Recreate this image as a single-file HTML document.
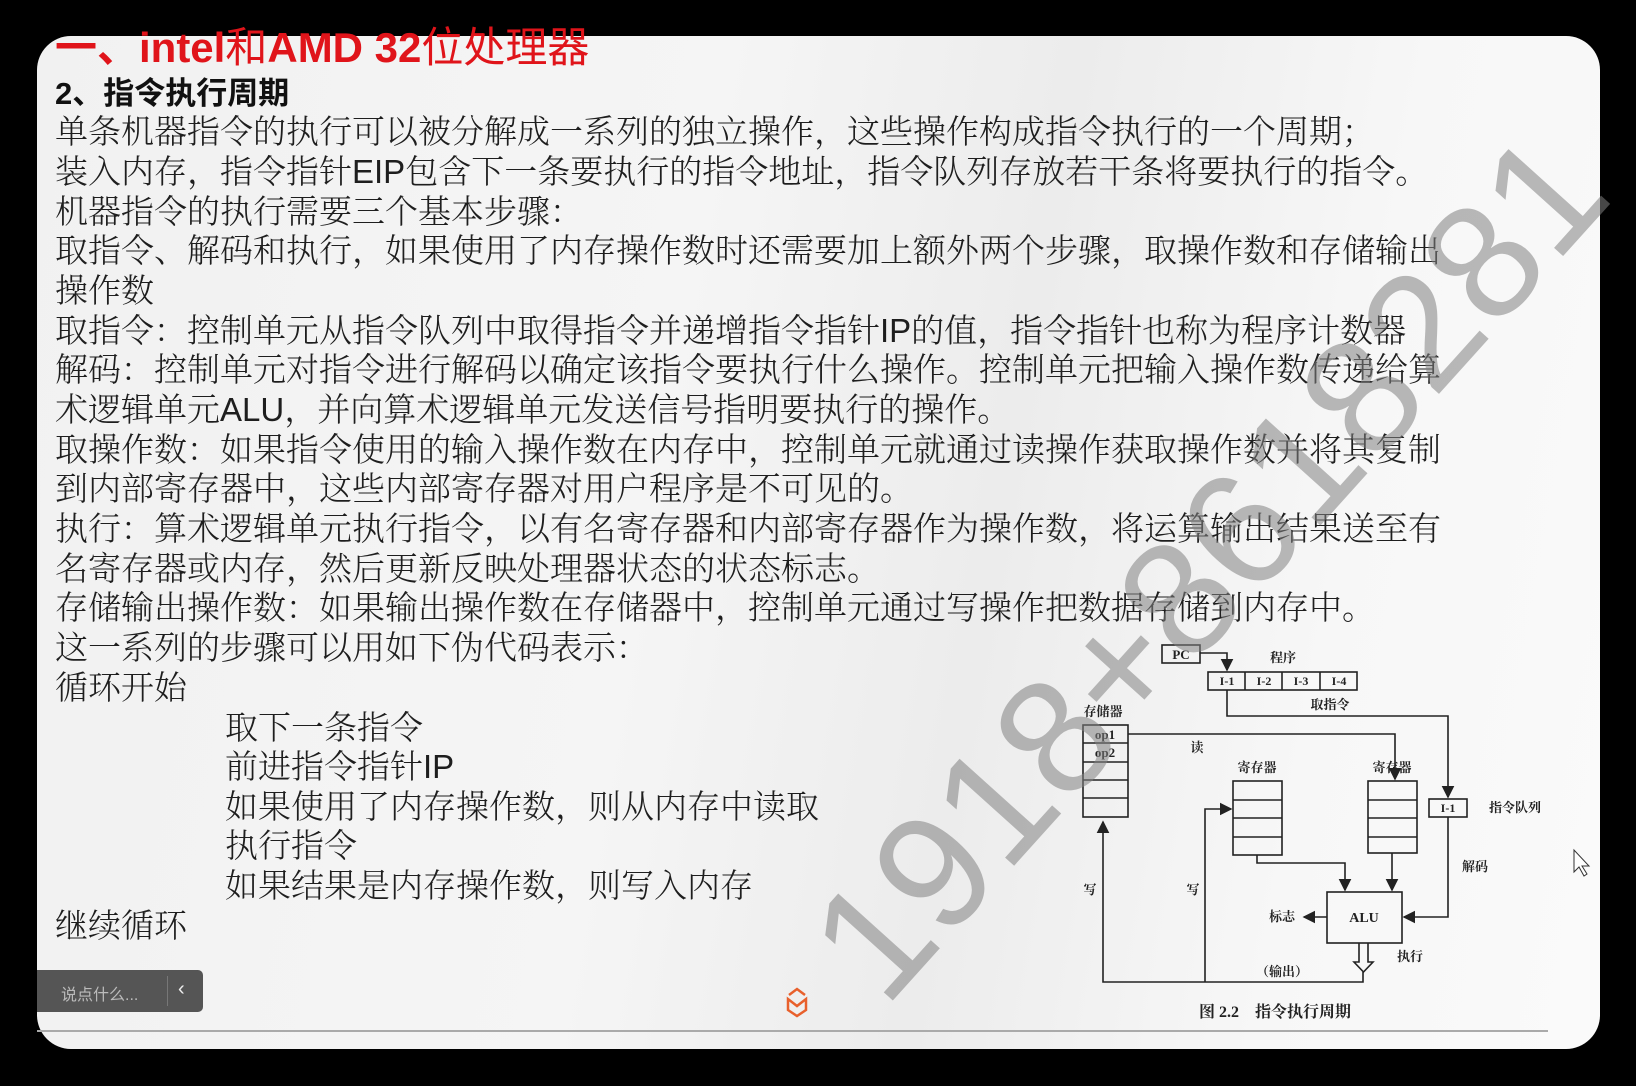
<!DOCTYPE html>
<html><head><meta charset="utf-8"><style>
html,body{margin:0;padding:0;}
body{width:1636px;height:1086px;background:#000;position:relative;overflow:hidden;font-family:"Liberation Sans","Noto Serif CJK SC",serif;}
#slide{position:absolute;left:37px;top:36px;width:1563px;height:1013px;border-radius:34px;overflow:hidden;
background:linear-gradient(100deg,#f1f1f1 0%,#f5f5f5 40%,#ececec 60%,#f7f7f7 80%,#fafafa 100%);}
.l{position:absolute;left:55px;height:40px;line-height:40px;font-size:33px;color:#1e1e1e;white-space:nowrap;font-family:"Liberation Sans","Noto Serif CJK SC",serif;font-weight:300;}
.in{left:225px;}
#title{position:absolute;left:55px;top:25px;font-size:42px;line-height:46px;color:#e0141a;font-weight:bold;font-family:"Liberation Sans","Noto Sans CJK SC",sans-serif;white-space:nowrap;}
#title span{font-weight:normal;}
#sub{position:absolute;left:55px;top:74px;font-size:31px;line-height:40px;color:#111;font-weight:bold;font-family:"Liberation Sans","Noto Sans CJK SC",sans-serif;}
#wm{position:absolute;left:1208px;top:566px;transform:translate(-50%,-50%) rotate(-48deg);font-size:163px;color:rgba(130,130,130,0.55);font-family:"Liberation Sans",sans-serif;white-space:nowrap;line-height:1;}
#chat{position:absolute;left:37px;top:970px;width:166px;height:42px;background:#555;border-radius:0 5px 5px 0;color:#bbb;font-family:"Liberation Sans","Noto Sans CJK SC",sans-serif;font-size:16px;}
#chat span{position:absolute;left:24px;top:11px;}
#chat i{position:absolute;left:130px;top:6px;height:30px;border-left:1px solid #777;}
#chat b{position:absolute;left:141px;top:8px;color:#eee;font-weight:normal;font-size:20px;}
svg text{font-family:"Liberation Serif","Noto Serif CJK SC",serif;font-weight:bold;fill:#222;}
</style></head><body>
<div id="slide"></div>
<div id="title">一、intel<span>和</span>AMD 32<span>位处理器</span></div>
<div id="sub">2、指令执行周期</div>
<div class="l" style="top:112px">单条机器指令的执行可以被分解成一系列的独立操作，这些操作构成指令执行的一个周期；</div>
<div class="l" style="top:152px">装入内存，指令指针EIP包含下一条要执行的指令地址，指令队列存放若干条将要执行的指令。</div>
<div class="l" style="top:192px">机器指令的执行需要三个基本步骤：</div>
<div class="l" style="top:231px">取指令、解码和执行，如果使用了内存操作数时还需要加上额外两个步骤，取操作数和存储输出</div>
<div class="l" style="top:271px">操作数</div>
<div class="l" style="top:311px">取指令：控制单元从指令队列中取得指令并递增指令指针IP的值，指令指针也称为程序计数器</div>
<div class="l" style="top:350px">解码：控制单元对指令进行解码以确定该指令要执行什么操作。控制单元把输入操作数传递给算</div>
<div class="l" style="top:390px">术逻辑单元ALU，并向算术逻辑单元发送信号指明要执行的操作。</div>
<div class="l" style="top:430px">取操作数：如果指令使用的输入操作数在内存中，控制单元就通过读操作获取操作数并将其复制</div>
<div class="l" style="top:469px">到内部寄存器中，这些内部寄存器对用户程序是不可见的。</div>
<div class="l" style="top:509px">执行：算术逻辑单元执行指令，以有名寄存器和内部寄存器作为操作数，将运算输出结果送至有</div>
<div class="l" style="top:549px">名寄存器或内存，然后更新反映处理器状态的状态标志。</div>
<div class="l" style="top:588px">存储输出操作数：如果输出操作数在存储器中，控制单元通过写操作把数据存储到内存中。</div>
<div class="l" style="top:628px">这一系列的步骤可以用如下伪代码表示：</div>
<div class="l" style="top:668px">循环开始</div>
<div class="l in" style="top:708px">取下一条指令</div>
<div class="l in" style="top:747px">前进指令指针IP</div>
<div class="l in" style="top:787px">如果使用了内存操作数，则从内存中读取</div>
<div class="l in" style="top:826px">执行指令</div>
<div class="l in" style="top:866px">如果结果是内存操作数，则写入内存</div>
<div class="l" style="top:906px">继续循环</div>

<svg width="1636" height="1086" style="position:absolute;left:0;top:0" viewBox="0 0 1636 1086">
<defs><marker id="a" markerWidth="8" markerHeight="8" refX="7" refY="4" orient="auto"><path d="M0,0 L8,4 L0,8 z" fill="#222"/></marker></defs>
<g stroke="#222" stroke-width="1.6" fill="none">
<rect x="1162" y="645" width="38" height="18"/>
<rect x="1208" y="672" width="149" height="18"/>
<line x1="1245" y1="672" x2="1245" y2="690"/><line x1="1282" y1="672" x2="1282" y2="690"/><line x1="1320" y1="672" x2="1320" y2="690"/>
<polyline points="1200,653 1227,653 1227,670" marker-end="url(#a)"/>
<polyline points="1227,690 1227,716 1448,716 1448,797" marker-end="url(#a)"/>
<rect x="1083" y="725" width="45" height="92"/>
<line x1="1083" y1="743" x2="1128" y2="743"/><line x1="1083" y1="762" x2="1128" y2="762"/><line x1="1083" y1="780" x2="1128" y2="780"/><line x1="1083" y1="798" x2="1128" y2="798"/>
<polyline points="1128,734 1395,734 1395,779" marker-end="url(#a)"/>
<rect x="1233" y="781" width="49" height="74"/>
<line x1="1233" y1="800" x2="1282" y2="800"/><line x1="1233" y1="818" x2="1282" y2="818"/><line x1="1233" y1="837" x2="1282" y2="837"/>
<rect x="1368" y="781" width="49" height="72"/>
<line x1="1368" y1="800" x2="1417" y2="800"/><line x1="1368" y1="818" x2="1417" y2="818"/><line x1="1368" y1="837" x2="1417" y2="837"/>
<rect x="1429" y="799" width="38" height="18"/>
<polyline points="1448,817 1448,917 1404,917" marker-end="url(#a)"/>
<polyline points="1257,855 1257,863 1345,863 1345,890" marker-end="url(#a)"/>
<line x1="1392" y1="853" x2="1392" y2="890" marker-end="url(#a)"/>
<rect x="1327" y="892" width="75" height="51"/>
<line x1="1327" y1="917" x2="1304" y2="917" marker-end="url(#a)"/>
<path d="M1359,943 V962 H1354 L1363.5,972 L1373,962 H1368 V943"/>
<polyline points="1363,972 1363,982 1103,982 1103,822" marker-end="url(#a)"/>
<polyline points="1205,982 1205,809 1231,809" marker-end="url(#a)"/>
</g>
<text x="1181" y="659" font-size="13" text-anchor="middle">PC</text>
<text x="1283" y="662" font-size="13" text-anchor="middle">程序</text>
<g font-size="12" text-anchor="middle"><text x="1227" y="685">I-1</text><text x="1264" y="685">I-2</text><text x="1301" y="685">I-3</text><text x="1339" y="685">I-4</text><text x="1448" y="812">I-1</text></g>
<text x="1330" y="709" font-size="13" text-anchor="middle">取指令</text>
<text x="1103" y="716" font-size="13" text-anchor="middle">存储器</text>
<text x="1105" y="739" font-size="13" text-anchor="middle" font-weight="normal">op1</text>
<text x="1105" y="757" font-size="13" text-anchor="middle" font-weight="normal">op2</text>
<text x="1197" y="752" font-size="13" text-anchor="middle">读</text>
<text x="1257" y="772" font-size="13" text-anchor="middle">寄存器</text>
<text x="1392" y="772" font-size="13" text-anchor="middle">寄存器</text>
<text x="1515" y="812" font-size="13" text-anchor="middle">指令队列</text>
<text x="1475" y="871" font-size="13" text-anchor="middle">解码</text>
<text x="1364" y="922" font-size="14" text-anchor="middle">ALU</text>
<text x="1282" y="921" font-size="13" text-anchor="middle">标志</text>
<text x="1090" y="894" font-size="13" text-anchor="middle">写</text>
<text x="1193" y="894" font-size="13" text-anchor="middle">写</text>
<text x="1410" y="961" font-size="13" text-anchor="middle">执行</text>
<text x="1282" y="976" font-size="13" text-anchor="middle">（输出）</text>
<text x="1275" y="1017" font-size="16" text-anchor="middle">图 2.2　指令执行周期</text>
<line x1="37" y1="1031" x2="1548" y2="1031" stroke="#aaa" stroke-width="2"/>
<path d="M789,995 L797,989 L805,995 M788,999 V1010 L797,1016 L806,1010 V999 L797,1006 Z" fill="none" stroke="#e8602c" stroke-width="2.5"/>
<path d="M1574,850 V872 L1579,867 L1584,876 L1587,874 L1582,866 L1589,866 Z" fill="#fff" stroke="#333" stroke-width="1"/>
</svg>
<div id="wm">1918+8618281</div>
<div id="chat"><span>说点什么...</span><i></i><b>‹</b></div>
</body></html>
